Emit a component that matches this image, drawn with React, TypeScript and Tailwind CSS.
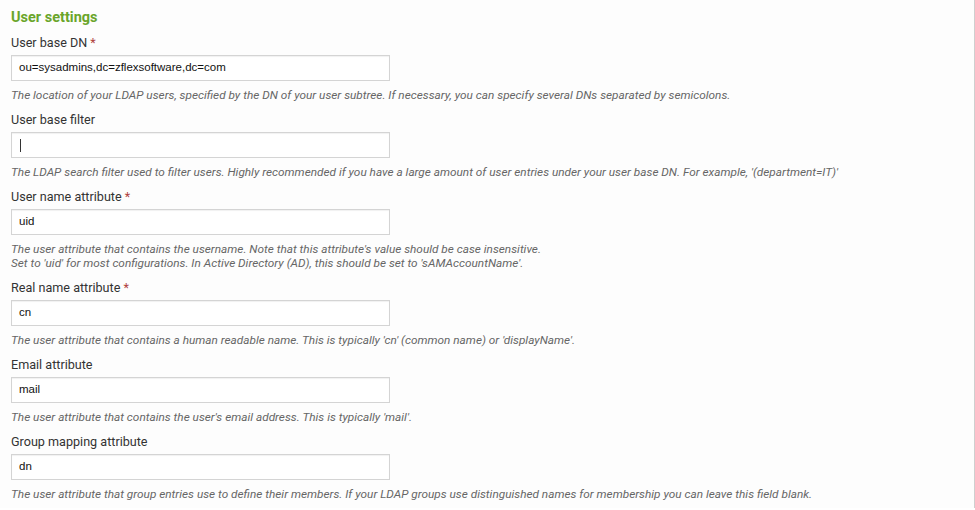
import React from "react";

type Field = {
  label: string;
  required?: boolean;
  value: string;
  cursor?: boolean;
  help: string[];
};

const fields: Field[] = [
  {
    label: "User base DN",
    required: true,
    value: "ou=sysadmins,dc=zflexsoftware,dc=com",
    help: [
      "The location of your LDAP users, specified by the DN of your user subtree. If necessary, you can specify several DNs separated by semicolons.",
    ],
  },
  {
    label: "User base filter",
    value: "",
    cursor: true,
    help: [
      "The LDAP search filter used to filter users. Highly recommended if you have a large amount of user entries under your user base DN. For example, '(department=IT)'",
    ],
  },
  {
    label: "User name attribute",
    required: true,
    value: "uid",
    help: [
      "The user attribute that contains the username. Note that this attribute's value should be case insensitive.",
      "Set to 'uid' for most configurations. In Active Directory (AD), this should be set to 'sAMAccountName'.",
    ],
  },
  {
    label: "Real name attribute",
    required: true,
    value: "cn",
    help: [
      "The user attribute that contains a human readable name. This is typically 'cn' (common name) or 'displayName'.",
    ],
  },
  {
    label: "Email attribute",
    value: "mail",
    help: ["The user attribute that contains the user's email address. This is typically 'mail'."],
  },
  {
    label: "Group mapping attribute",
    value: "dn",
    help: [
      "The user attribute that group entries use to define their members. If your LDAP groups use distinguished names for membership you can leave this field blank.",
    ],
  },
];

export default function App() {
  return (
    <div className="w-[975px] h-[510px] bg-white overflow-hidden" style={{ fontFamily: "Roboto, 'Liberation Sans', sans-serif" }}>
      <div className="w-[975px] h-[508px] border-r border-[#cfcfcf] bg-[#fdfdfd] pl-[11px] pt-[8px]">
        <h2 className="text-[14.5px] leading-[20px] font-bold text-[#6aa52b]">User settings</h2>
        <div className="mt-[7px]">
          {fields.map((f, i) => (
            <div key={i} className={i === 0 ? "" : "mt-[10px]"}>
              <div className="text-[12.6px] leading-[16px] text-[#333]">
                {f.label}
                {f.required && <span className="text-[#b0413e]"> *</span>}
              </div>
              <div className="mt-[4px] w-[379px] h-[26px] border border-[#d4d4d4] bg-white shadow-[inset_0_1px_1px_rgba(0,0,0,0.06)] flex items-center px-[7px] text-[11.5px] text-[#111] font-['Liberation_Sans',Arial,sans-serif]">
                {f.cursor ? <span className="inline-block w-[1px] h-[13px] bg-[#333] ml-[1px]" /> : f.value}
              </div>
              <div className="mt-[7px] text-[11.8px] leading-[14px] italic text-[#666]">
                {f.help.map((h, j) => (
                  <div key={j}>{h}</div>
                ))}
              </div>
            </div>
          ))}
        </div>
      </div>
    </div>
  );
}
